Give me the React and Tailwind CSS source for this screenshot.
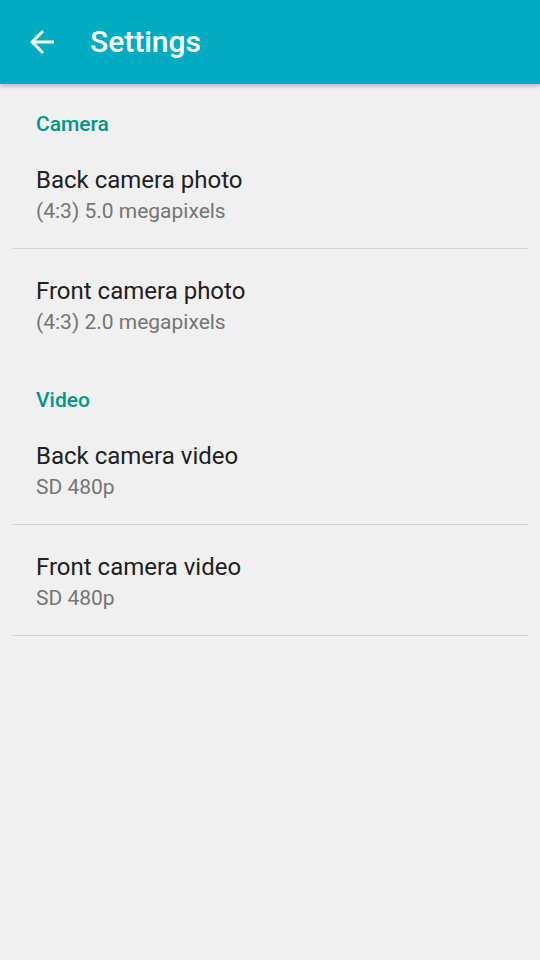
import React from "react";

const sections = [
  {
    title: "Camera",
    items: [
      { label: "Back camera photo", value: "(4:3) 5.0 megapixels" },
      { label: "Front camera photo", value: "(4:3) 2.0 megapixels" },
    ],
  },
  {
    title: "Video",
    items: [
      { label: "Back camera video", value: "SD 480p" },
      { label: "Front camera video", value: "SD 480p" },
    ],
  },
];

const ArrowBack = () => (
  <svg width="36" height="36" viewBox="0 0 24 24" fill="white">
    <path d="M20 11H7.83l5.59-5.59L12 4l-8 8 8 8 1.41-1.41L7.83 13H20v-2z" />
  </svg>
);

export default function App() {
  return (
    <div
      className="w-[540px] h-[960px] bg-[#f0f0f0] overflow-hidden"
      style={{ fontFamily: "Roboto, 'Noto Sans', sans-serif" }}
    >
      <header className="relative z-10 h-[84px] bg-[#00acc1] flex items-center shadow-[0_2px_4px_rgba(0,0,0,0.25)]">
        <div className="ml-[24px] w-[36px] h-[36px]">
          <ArrowBack />
        </div>
        <h1 className="ml-[30px] text-[30px] font-medium text-white leading-none">
          Settings
        </h1>
      </header>

      {sections.map((section, si) => (
        <div key={section.title}>
          <div className="h-[54px] pt-[28px] pl-[36px]">
            <p className="text-[21px] leading-[24px] font-medium text-[#009688]">
              {section.title}
            </p>
          </div>
          {section.items.map((item, i) => {
            const withDivider = !(si === 0 && i === section.items.length - 1);
            return (
              <div
                key={item.label}
                className={
                  withDivider
                    ? "mx-[12px] h-[111px] pt-[27px] px-[24px] border-b border-[#d6d6d6]"
                    : "mx-[12px] h-[111px] pt-[27px] px-[24px]"
                }
              >
                <p className="text-[24px] leading-[30px] text-[#212121]">
                  {item.label}
                </p>
                <p className="mt-[4px] text-[21px] leading-[24px] text-[#757575]">
                  {item.value}
                </p>
              </div>
            );
          })}
        </div>
      ))}
    </div>
  );
}
